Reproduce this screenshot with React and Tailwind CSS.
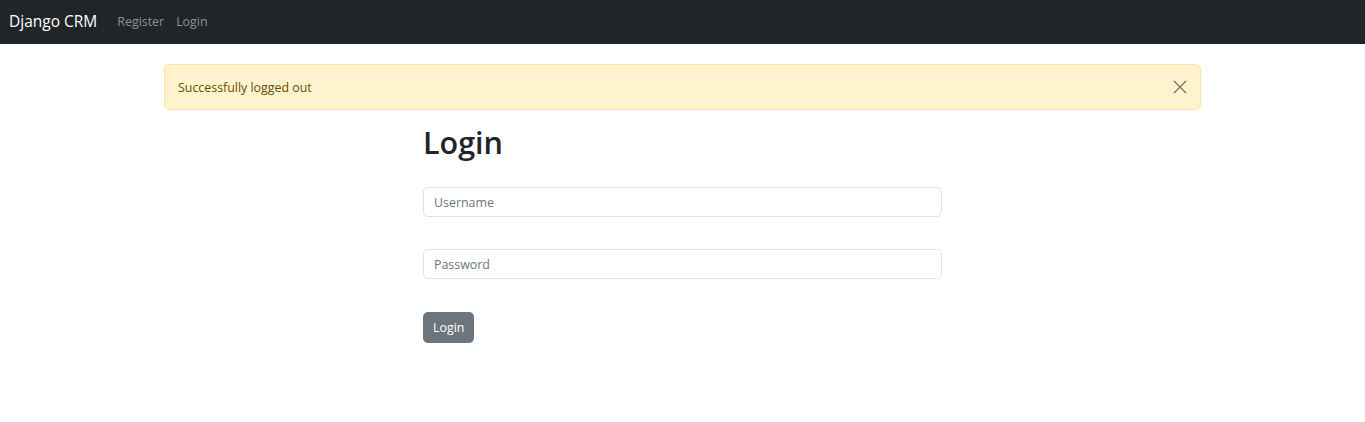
import React from 'react';

export default function App() {
  return (
    <div className="min-h-[422px] bg-white text-[#212529] text-[12.4px] leading-[1.5]" style={{ fontFamily: '"Open Sans", "Noto Sans", sans-serif' }}>
      {/* Top navbar */}
      <nav className="h-[44px] bg-[#212529] flex items-center px-[9px]">
        <a href="#" className="text-white text-[15.5px] mr-[20px]">Django CRM</a>
        <div className="flex items-center gap-[12px] text-[#8f9193]">
          <a href="#">Register</a>
          <a href="#">Login</a>
        </div>
      </nav>

      <div className="w-[1037px] mx-auto pt-[20px]">
        <div className="h-[46px] flex items-center justify-between bg-[#fff3cd] border border-[#ffe69c] rounded-[5px] pl-[13px] pr-[12px] text-[#664d03]">
          <span className="pt-[2px]">Successfully logged out</span>
          <button className="w-[16px] h-[16px] flex items-center justify-center opacity-60">
            <svg width="14" height="14" viewBox="0 0 14 14" stroke="#212529" strokeWidth="1.4" fill="none">
              <path d="M1 1L13 13M13 1L1 13" />
            </svg>
          </button>
        </div>

        <div className="w-[519px] mx-auto mt-[13px] flex flex-col">
          <h1 className="text-[30.5px] font-semibold leading-[38px] mb-[26px]">Login</h1>
          <input
            type="text"
            placeholder="Username"
            className="h-[30px] border border-[#dee2e6] rounded-[5px] px-[10px] pt-[1px] outline-none placeholder:text-[#6c757d]"
          />
          <input
            type="password"
            placeholder="Password"
            className="h-[30px] mt-[32px] border border-[#dee2e6] rounded-[5px] px-[10px] pt-[1px] outline-none placeholder:text-[#6c757d]"
          />
          <div className="mt-[33px]">
            <button className="h-[31px] px-[10px] pt-[1px] bg-[#6c757d] text-white rounded-[5px]">Login</button>
          </div>
        </div>
      </div>
    </div>
  );
}
